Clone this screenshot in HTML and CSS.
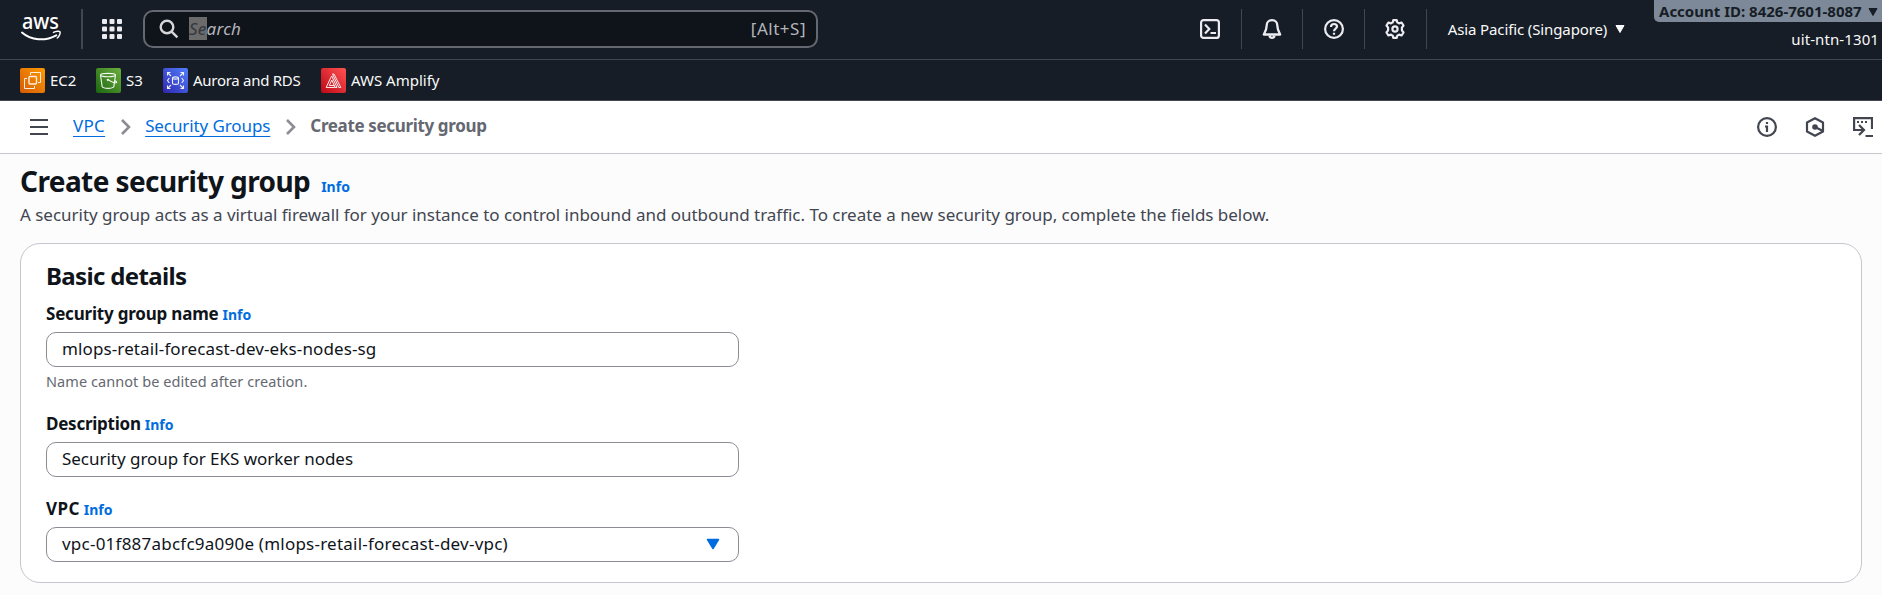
FILE: index.html
```html
<!DOCTYPE html>
<html lang="en">
<head>
<meta charset="utf-8">
<title>Create security group | VPC</title>
<link rel="stylesheet" href="styles.css">
</head>
<body>
<header class="topnav">
  <svg class="logo" width="40" height="36" viewBox="0 -6 40 36">
    <text class="logo-text" x="1" y="15" textLength="37" lengthAdjust="spacingAndGlyphs">aws</text>
    <path d="M1 18.6C10 26.600 24 27.500 35.300 21.300" fill="none" stroke="#fff" stroke-width="2" stroke-linecap="round"/>
    <path d="M32.500 18.400C35 17 38.400 17 39 17.800C39.600 18.800 38.300 22.500 36.300 24" fill="none" stroke="#fff" stroke-width="1.500" stroke-linecap="round"/>
  </svg>
  <span class="logo-rule"></span>
  <svg class="apps" width="20" height="20" viewBox="0 0 20 20" fill="#ebebf0">
    <rect width="5" height="5" rx="1"/><rect x="7.500" width="5" height="5" rx="1"/><rect x="15" width="5" height="5" rx="1"/>
    <rect y="7.500" width="5" height="5" rx="1"/><rect x="7.500" y="7.500" width="5" height="5" rx="1"/><rect x="15" y="7.500" width="5" height="5" rx="1"/>
    <rect y="15" width="5" height="5" rx="1"/><rect x="7.500" y="15" width="5" height="5" rx="1"/><rect x="15" y="15" width="5" height="5" rx="1"/>
  </svg>
  <div class="search">
    <svg width="20" height="20" viewBox="0 0 20 20" fill="none" stroke="#d5d5da" stroke-width="2.400"><circle cx="8" cy="8" r="6.300"/><path d="M12.600 12.600L18.400 18.400"/></svg>
    <span class="search-text"><span class="selected">Se</span>arch</span>
    <span class="shortcut">[Alt+S]</span>
  </div>
  <div class="tools">
    <span class="tool"><svg width="20" height="20" viewBox="0 0 20 20" fill="none" stroke="#ebebf0" stroke-width="2.200"><rect x="1.100" y="1.100" width="17.800" height="17.800" rx="2.500"/><path d="M5 5.500L9.300 10L5 14.500M10.500 14H16"/></svg></span>
    <span class="tool"><svg width="20" height="20" viewBox="0 0 20 20" fill="none" stroke="#ebebf0" stroke-width="2.300" stroke-linejoin="round"><path d="M10 1.200C6.500 1.200 4.700 3.600 4.700 6.500C4.700 10.500 3.500 12.500 1.800 15.500H18.200C16.500 12.500 15.300 10.500 15.300 6.500C15.300 3.600 13.500 1.200 10 1.200Z"/><path d="M7.500 16.500C7.800 18.300 8.700 18.800 10 18.800S12.200 18.300 12.500 16.500"/></svg></span>
    <span class="tool"><svg width="20" height="20" viewBox="0 0 20 20" fill="none" stroke="#ebebf0" stroke-width="2.200"><circle cx="10" cy="10" r="8.900"/><path d="M7 8C7 6 8.200 5 10 5S13 6.100 13 7.600C13 9.600 10 9.600 10 12.200M10 13.700V15.800"/></svg></span>
    <span class="tool"><svg width="20" height="20" viewBox="0 0 20 20" fill="none" stroke="#ebebf0" stroke-width="2.200" stroke-linejoin="round"><path d="M8.300 1.100H11.700L12.300 3.400L14 4.400L16.600 3.500L18.500 6.500L16.900 8.700V11.300L18.500 13.500L16.600 16.500L14 15.600L12.300 16.600L11.700 18.900H8.300L7.700 16.600L6 15.600L3.400 16.500L1.500 13.500L3.100 11.300V8.700L1.500 6.500L3.400 3.500L6 4.400L7.700 3.400Z"/><circle cx="10" cy="10" r="2.600"/></svg></span>
  </div>
  <div class="region"><span>Asia Pacific (Singapore)</span><svg width="10" height="8" viewBox="0 0 10 8"><path d="M1 .5H9L5 7.500Z" fill="#f9f9fa" stroke="#f9f9fa" stroke-linejoin="round"/></svg></div>
  <div class="account">
    <div class="account-id"><span>Account ID: 8426-7601-8087</span><svg width="10" height="8" viewBox="0 0 10 8"><path d="M1 .5H9L5 7.500Z" fill="#161d26" stroke="#161d26" stroke-linejoin="round"/></svg></div>
    <div class="user">uit-ntn-1301</div>
  </div>
</header>

<nav class="favorites">
  <a class="fav fav-ec2"><svg width="25" height="25" viewBox="0 0 25 25">
    <defs><linearGradient id="ec2" x1="0" y1="1" x2="1" y2="0"><stop stop-color="#d45b07"/><stop offset="1" stop-color="#ff9900"/></linearGradient></defs>
    <rect width="25" height="25" rx="2" fill="url(#ec2)"/>
    <g fill="none" stroke="#fff" opacity=".88"><rect x="9" y="8.500" width="7.500" height="7.500" rx="1" stroke-width="1.400"/><path d="M10.500 7V4.500H20.500V14.500H18M7 10.500H4.500V20.500H14.500V18"/></g></svg><span>EC2</span></a>
  <a class="fav fav-s3"><svg width="25" height="25" viewBox="0 0 25 25">
    <defs><linearGradient id="s3" x1="0" y1="1" x2="1" y2="0"><stop stop-color="#1b660f"/><stop offset="1" stop-color="#6cae3e"/></linearGradient></defs>
    <rect width="25" height="25" rx="2" fill="url(#s3)"/>
    <g fill="none" stroke="#fff" stroke-width="1.150" opacity=".92"><ellipse cx="12" cy="7" rx="7.500" ry="1.700"/><path d="M4.500 7L6.200 18.800C7.500 20.800 16.500 20.800 17.800 18.800L19.500 7M12 11.500C15 13.500 19 15.200 20.500 14.600C21 14 19.800 13 18.700 12.500"/></g><circle cx="11.800" cy="11.800" r="1.100" fill="#fff"/></svg><span>S3</span></a>
  <a class="fav fav-rds"><svg width="25" height="25" viewBox="0 0 25 25">
    <defs><linearGradient id="rds" x1="0" y1="1" x2="1" y2="0"><stop stop-color="#2e27ad"/><stop offset="1" stop-color="#527fff"/></linearGradient></defs>
    <rect width="25" height="25" rx="2" fill="url(#rds)"/>
    <g fill="none" stroke="#fff" stroke-width="1.100" opacity=".92"><path d="M7.500 4.500H4.500V7.500M4.500 4.500L8 8M17.500 4.500H20.500V7.500M20.500 4.500L17 8M4.500 17.500V20.500H7.500M4.500 20.500L8 17M20.500 17.500V20.500H17.500M20.500 20.500L17 17M6.300 10L4.500 12.500L6.300 15M18.700 10L20.500 12.500L18.700 15"/><ellipse cx="12.500" cy="10" rx="3" ry="1.100"/><path d="M9.500 10V15.300C9.500 16.800 15.500 16.800 15.500 15.300V10"/></g></svg><span>Aurora and RDS</span></a>
  <a class="fav fav-amp"><svg width="25" height="25" viewBox="0 0 25 25">
    <defs><linearGradient id="amp" x1="0" y1="1" x2="1" y2="0"><stop stop-color="#bd0816"/><stop offset="1" stop-color="#ff5252"/></linearGradient></defs>
    <rect width="25" height="25" rx="2" fill="url(#amp)"/>
    <g fill="none" stroke="#fff" stroke-linejoin="round" opacity=".9"><path d="M9.800 9.500L5.200 19.500H13.800L13 17.500H8.300L10.800 12L14.200 19.500H16L10.700 8Z"/><path d="M11.500 6H13L19.800 19.500H17.800Z"/></g></svg><span>AWS Amplify</span></a>
</nav>

<div class="crumbbar">
  <svg class="menu" width="18" height="16" viewBox="0 0 18 16" stroke="#424650" stroke-width="2"><path d="M0 1H18M0 8H18M0 15H18"/></svg>
  <a class="crumb crumb-vpc">VPC</a>
  <svg class="chev" width="10" height="16" viewBox="0 0 10 16" fill="none" stroke="#8c8c94" stroke-width="2.600"><path d="M1 1L8 8L1 15"/></svg>
  <a class="crumb crumb-sg">Security Groups</a>
  <svg class="chev chev-end" width="10" height="16" viewBox="0 0 10 16" fill="none" stroke="#8c8c94" stroke-width="2.600"><path d="M1 1L8 8L1 15"/></svg>
  <span class="current">Create security group</span>
  <div class="page-tools">
    <svg width="20" height="20" viewBox="0 0 20 20" fill="none" stroke="#424650" stroke-width="2.200"><circle cx="10" cy="10" r="8.900"/><path d="M10 5V7M8 9.500H10V15"/></svg>
    <svg width="20" height="20" viewBox="0 0 20 20" fill="none" stroke="#424650" stroke-width="2.200"><path d="M10 1.200L18 5.500V14.500L10 18.800L2 14.500V5.500Z" stroke-linejoin="round"/><path d="M10 10L18 14"/><circle cx="10" cy="10" r="2.800" fill="#424650" stroke="none"/></svg>
    <svg width="20" height="20" viewBox="0 0 20 20" fill="none" stroke="#424650" stroke-width="2.200"><path d="M19 12V1.100H1.100V13H10M6 8L11 13L6 18M12.500 19H20"/><path d="M4 5H6M8 5H10M12 5H14" stroke-width="2"/></svg>
  </div>
</div>

<main class="page">
  <div class="page-head"><h1>Create security group</h1><a class="info">Info</a></div>
  <p class="lead">A security group acts as a virtual firewall for your instance to control inbound and outbound traffic. To create a new security group, complete the fields below.</p>
  <section class="card">
    <h2>Basic details</h2>
    <div class="field">
      <div class="label"><span class="l-name">Security group name</span><a class="info">Info</a></div>
      <div class="control t-name">mlops-retail-forecast-dev-eks-nodes-sg</div>
      <div class="hint">Name cannot be edited after creation.</div>
    </div>
    <div class="field">
      <div class="label"><span class="l-desc">Description</span><a class="info">Info</a></div>
      <div class="control t-desc">Security group for EKS worker nodes</div>
    </div>
    <div class="field">
      <div class="label"><span class="l-vpc">VPC</span><a class="info">Info</a></div>
      <div class="control t-vpc"><span>vpc-01f887abcfc9a090e (mlops-retail-forecast-dev-vpc)</span><svg width="14" height="12" viewBox="0 0 14 12"><path d="M1.500 1.500H12.500L7 10.500Z" fill="#006ce0" stroke="#006ce0" stroke-width="1.500" stroke-linejoin="round"/></svg></div>
    </div>
  </section>
</main>
</body>
</html>
```
FILE: styles.css
```css
* { box-sizing: border-box; }
body {
  margin: 0;
  height: 595px;
  overflow: hidden;
  background: #fcfcfd;
  color: #0f141a;
  font: 17px/22px "Noto Sans", "Open Sans", sans-serif;
}
svg { display: block; flex: none; }
h1, h2, p { margin: 0; }
span, a, div { white-space: nowrap; }

.topnav {
  display: flex;
  align-items: flex-start;
  height: 60px;
  background: #161d26;
  border-bottom: 1px solid #424650;
}
.logo { margin: 8px 0 0 21px; overflow: visible; }
.logo-text { font-size: 22px; font-weight: 500; fill: #fff; }
.logo-rule { width: 2px; height: 40px; margin: 9px 0 0 20px; background: #424650; }
.apps { margin: 19px 0 0 19px; }
.search {
  display: flex;
  align-items: center;
  width: 675px;
  height: 38px;
  margin: 10px 0 0 21px;
  padding: 0 10px 0 14px;
  border: 2px solid #656871;
  border-radius: 10px;
  background: #0f141a;
  color: #b4b4bb;
}
.search-text { margin: 0 0 0 10px; font-style: italic; letter-spacing: .25px; }
.selected { background: #6b6b6b; color: #33373d; }
.shortcut { margin: 0 0 0 auto; letter-spacing: .5px; }

.tools { display: flex; margin: 9px 0 0 362px; }
.tool {
  display: flex;
  align-items: center;
  justify-content: center;
  width: 61.7px;
  height: 40px;
  border-right: 1px solid #424650;
}
.region {
  display: flex;
  align-items: center;
  gap: 8px;
  height: 22px;
  margin: 18px 0 0 21px;
  color: #f9f9fa;
  font-size: 15px;
  letter-spacing: -.12px;
}
.account { width: 228px; margin-left: auto; }
.account-id {
  display: flex;
  align-items: center;
  justify-content: space-between;
  height: 22px;
  padding: 0 4px 0 5px;
  border-radius: 0 0 0 5px;
  background: #7d8998;
  color: #161d26;
  font-size: 15px;
  font-weight: 700;
}
.account-id svg { margin-top: 1px; }
.user { margin: 6px 3px 0 0; text-align: right; color: #f9f9fa; font-size: 15px; letter-spacing: .1px; }

.favorites {
  display: flex;
  height: 41px;
  padding-left: 20px;
  background: #161d26;
  border-bottom: 1px solid #424650;
}
.fav { display: flex; align-items: center; gap: 5px; color: #f9f9fa; font-size: 15px; }
.fav-ec2 { width: 76px; }
.fav-s3 { width: 67px; }
.fav-rds { width: 158px; letter-spacing: -.28px; }

.crumbbar {
  display: flex;
  align-items: center;
  height: 53px;
  padding: 0 9px 0 30px;
  background: #fff;
  border-bottom: 1px solid #c6c6cd;
}
.menu { margin-right: 25px; }
.crumb {
  margin-top: -2px;
  color: #006ce0;
  text-decoration: underline;
  text-decoration-thickness: 1px;
  text-underline-offset: 4px;
}
.crumb-vpc { letter-spacing: .3px; }
.crumb-sg { letter-spacing: -.1px; }
.chev { margin: 0 14px 0 16px; }
.chev-end { margin-right: 14px; }
.current { margin-top: -2px; color: #656871; font-weight: 700; letter-spacing: -.35px; }
.page-tools { display: flex; gap: 28px; margin-left: auto; }

.page { padding: 10px 20px 0; }
.page-head { display: flex; align-items: baseline; height: 34px; }
h1 { font-size: 28px; line-height: 34px; letter-spacing: -.58px; margin-right: 11px; }
.info { color: #006ce0; font-size: 14px; font-weight: 700; }
.lead { margin-top: 5px; line-height: 24px; color: #424650; letter-spacing: -.025px; white-space: nowrap; }
.card {
  height: 340px;
  margin-top: 16px;
  padding: 17px 25px 0;
  border: 1px solid #c6c6cd;
  border-radius: 20px;
  background: #fff;
}
h2 { font-size: 24px; line-height: 30px; letter-spacing: -.65px; }
.field { width: 693px; margin-top: 12px; }
.field + .field { margin-top: 21px; }
.label { display: flex; align-items: baseline; gap: 4px; height: 29px; font-weight: 700; }
.l-name { letter-spacing: -.2px; }
.l-desc { letter-spacing: -.25px; }
.l-vpc { letter-spacing: .4px; }
.control {
  display: flex;
  align-items: center;
  justify-content: space-between;
  height: 35px;
  padding: 0 18px 2px 15px;
  border: 1px solid #8c8c94;
  border-radius: 10px;
  background: #fff;
}
.t-name { letter-spacing: .12px; }
.t-desc { letter-spacing: -.03px; }
.t-vpc { letter-spacing: .23px; }
.hint { height: 25px; padding-top: 4px; line-height: 20px; color: #656871; font-size: 14.5px; letter-spacing: .06px; }
```
